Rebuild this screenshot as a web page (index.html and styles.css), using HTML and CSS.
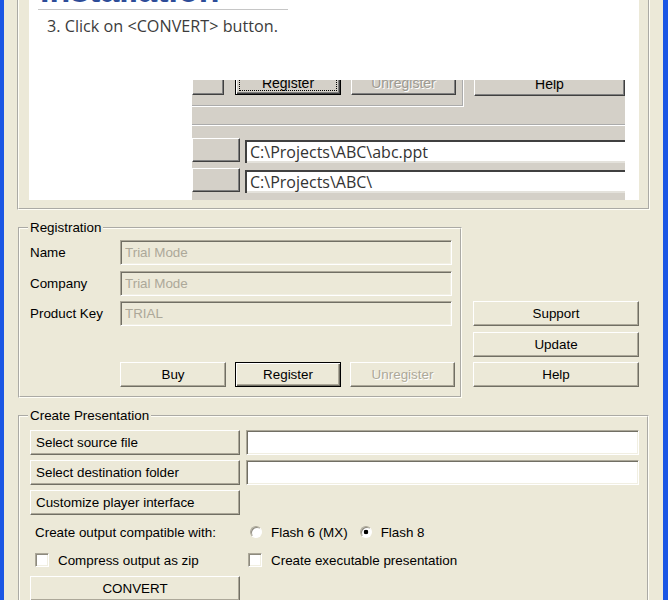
FILE: index.html
```html
<!DOCTYPE html>
<html lang="en">
<head>
    <meta charset="UTF-8">
    <meta name="viewport" content="width=device-width, initial-scale=1.0">
    <title>Converter</title>
    <link rel="stylesheet" href="styles.css">
</head>
<body>
    <div class="window">
        <!-- Tutorial preview -->
        <div class="preview">
            <div class="slide">
                <div class="slide-head">
                    <div class="slide-title"><span>Installation</span></div>
                    <div class="slide-rule"></div>
                    <p class="slide-step">3. Click on &lt;CONVERT&gt; button.</p>
                </div>
                <div class="shot">
                    <div class="shot-top">
                        <div class="shot-group">
                            <span class="cbtn stub"></span>
                            <span class="cbtn focus"><span>Register</span></span>
                            <span class="cbtn off">Unregister</span>
                        </div>
                        <span class="cbtn help">Help</span>
                    </div>
                    <div class="shot-band"></div>
                    <div class="shot-field">
                        <span class="cbtn stub-wide"></span>
                        <span class="cfield">C:\Projects\ABC\abc.ppt</span>
                    </div>
                    <div class="shot-field">
                        <span class="cbtn stub-wide"></span>
                        <span class="cfield">C:\Projects\ABC\</span>
                    </div>
                </div>
            </div>
        </div>

        <!-- Registration -->
        <div class="reg-row">
            <fieldset class="group reg">
                <legend>Registration</legend>
                <div class="reg-grid">
                    <label>Name</label>
                    <input class="field" type="text" value="Trial Mode" disabled>
                    <label>Company</label>
                    <input class="field" type="text" value="Trial Mode" disabled>
                    <label>Product Key</label>
                    <input class="field" type="text" value="TRIAL" disabled>
                </div>
                <div class="reg-buttons">
                    <button class="btn">Buy</button>
                    <button class="btn default">Register</button>
                    <button class="btn" disabled>Unregister</button>
                </div>
            </fieldset>
            <div class="side">
                <button class="btn">Support</button>
                <button class="btn">Update</button>
                <button class="btn">Help</button>
            </div>
        </div>

        <!-- Create Presentation -->
        <fieldset class="group create">
            <legend>Create Presentation</legend>
            <div class="create-grid">
                <button class="btn left">Select source file</button>
                <input class="field white" type="text">
                <button class="btn left">Select destination folder</button>
                <input class="field white" type="text">
                <button class="btn left">Customize player interface</button>
                <span></span>
                <span class="opt-label">Create output compatible with:</span>
                <div class="opts">
                    <span class="opt"><span class="radio"></span>Flash 6 (MX)</span>
                    <span class="opt"><span class="radio on"></span>Flash 8</span>
                </div>
                <span class="opt first"><span class="check"></span>Compress output as zip</span>
                <span class="opt"><span class="check"></span>Create executable presentation</span>
                <button class="btn">CONVERT</button>
            </div>
        </fieldset>
    </div>
</body>
</html>
```

FILE: styles.css
```css
/* Basic Reset */
* {
    box-sizing: border-box;
    margin: 0;
    padding: 0;
}

body {
    font-family: "Liberation Sans", Arial, sans-serif;
    font-size: 13.4px;
    color: #000;
    background: #ece9d8;
}

/* Window frame */
.window {
    width: 668px;
    height: 600px;
    overflow: hidden;
    background: #ece9d8;
    border-left: 4px solid #1a56e4;
    border-right: 5px solid #1a56e4;
}

/* Preview panel */
.preview {
    margin-left: 13px;
    width: 633px;
    height: 210px;
    border: 2px groove #fffef6;
    border-top: none;
    padding: 0 9px 8px 10px;
}

.slide {
    width: 610px;
    height: 200px;
    background: #fff;
    display: flex;
    flex-direction: column;
    overflow: hidden;
}

.slide-head {
    height: 80px;
    padding-left: 9px;
}

.slide-title {
    height: 6px;
    overflow: hidden;
}

.slide-title span {
    display: block;
    margin-top: -26px;
    font: bold 34px/32px "Liberation Sans", Arial, sans-serif;
    color: #2d4c98;
    padding-left: 2px;
}

.slide-rule {
    width: 250px;
    height: 1px;
    margin-top: 3px;
    background: #c6c6c6;
}

.slide-step {
    margin-top: 5px;
    padding-left: 9px;
    font-family: "Open Sans", sans-serif;
    font-size: 16.2px;
    color: #3c3c3c;
}

/* Screenshot crop inside the slide */
.shot {
    flex: 1;
    margin-left: 163px;
    width: 433px;
    background: #d4d0c8;
    overflow: hidden;
}

.shot-top {
    display: flex;
}

.shot-group {
    width: 272px;
    height: 27px;
    border: 2px groove #fff;
    border-top: none;
    border-left: none;
    display: flex;
    align-items: flex-end;
    padding-bottom: 10px;
    overflow: hidden;
}

.cbtn {
    display: flex;
    align-items: center;
    justify-content: center;
    height: 24px;
    background: #d4d0c8;
    border: 1px solid;
    border-color: #fff #404040 #404040 #fff;
    box-shadow: inset -1px -1px #808080;
    font-size: 14px;
    color: #000;
}

.shot-group .cbtn {
    flex-shrink: 0;
}

.stub {
    width: 32px;
}

.focus {
    width: 106px;
    margin-left: 11px;
    border: 1px solid #000;
    box-shadow: inset 1px 1px #fff, inset -1px -1px #404040, inset -2px -2px #808080;
    padding: 3px;
}

.focus span {
    flex: 1;
    height: 100%;
    border: 1px dotted #000;
    text-align: center;
    line-height: 14px;
}

.off {
    width: 105px;
    margin-left: 10px;
    color: #9d9a92;
    text-shadow: 1px 1px #fff;
}

.help {
    flex: 1;
    margin-left: 10px;
    margin-top: -8px;
}

.shot-band {
    height: 19px;
    border-bottom: 2px groove #fff;
    margin-bottom: 12px;
}

.shot-field {
    display: flex;
    height: 25px;
    margin-bottom: 5px;
}

.stub-wide {
    width: 48px;
}

.cfield {
    flex: 1;
    align-self: flex-end;
    height: 23px;
    margin-left: 5px;
    background: #fff;
    border-top: 2px solid #404040;
    border-left: 2px solid #404040;
    box-shadow: inset 0 -2px #e4e2dc;
    padding-left: 3px;
    font-family: "Open Sans", sans-serif;
    font-size: 16px;
    line-height: 20px;
    color: #333;
    white-space: nowrap;
}

/* Group boxes */
.group {
    border: 2px groove #fffef6;
    min-inline-size: 0;
}

.group legend {
    padding: 0 2px;
    margin-left: -2px;
    line-height: 16px;
}

.reg-row {
    display: flex;
    margin-top: 10px;
    margin-left: 14px;
}

.reg {
    width: 444px;
    padding: 4px 5px 9px 10px;
}

.reg-grid {
    display: grid;
    grid-template-columns: 90px 332px;
    grid-auto-rows: 25px;
    row-gap: 5.5px;
    align-items: center;
}

.field {
    height: 25px;
    font: inherit;
    padding: 0 4px;
    background: #ece9d8;
    border: 1px solid;
    border-color: #aca899 #fff #fff #aca899;
    box-shadow: inset 1px 1px #716f64, inset -1px -1px #f1efe2;
    color: #aca899;
    outline: none;
}

.field.white {
    background: #fff;
}

.reg-buttons {
    display: flex;
    gap: 9px;
    margin-top: 36px;
    margin-left: 90px;
}

.btn {
    height: 25px;
    font: inherit;
    color: #000;
    background: #ece9d8;
    border: 1px solid;
    border-color: #fff #716f64 #716f64 #fff;
    box-shadow: inset -1px -1px #aca899;
    text-align: center;
}

.reg-buttons .btn {
    width: 106px;
}

.reg-buttons .btn:last-child {
    width: 105px;
}

.btn.default {
    border: 1px solid #000;
    box-shadow: inset 1px 1px #fff, inset -1px -1px #716f64, inset -2px -2px #aca899;
}

.btn:disabled {
    color: #aca899;
    text-shadow: 1px 1px #fff;
}

.btn.left {
    text-align: left;
    padding-left: 5px;
}

.side {
    align-self: flex-end;
    display: flex;
    flex-direction: column;
    gap: 5.5px;
    width: 166px;
    margin-left: 11px;
    margin-bottom: 11px;
}

/* Create Presentation */
.create {
    margin-top: 10px;
    margin-left: 14px;
    width: 631px;
    height: 220px;
    padding: 6px 8px 0 10px;
}

.create-grid {
    display: grid;
    grid-template-columns: 210px 1fr;
    grid-template-rows: 25px 25px 25px 24px 22px 25px;
    column-gap: 6px;
    row-gap: 5px;
    align-items: center;
}

.opt-label {
    padding-left: 5px;
}

.opts {
    display: flex;
    gap: 10px;
    padding-left: 2px;
}

.opt {
    display: flex;
    align-items: center;
    gap: 9px;
    padding-left: 2px;
}

.opt.first {
    padding-left: 5px;
}

.radio {
    width: 12px;
    height: 12px;
    border-radius: 50%;
    background: #fff;
    border: 1px solid;
    border-color: #aca899 #fff #fff #aca899;
    box-shadow: inset 1px 1px #8d8a7e;
}

.radio.on {
    background: radial-gradient(circle, #000 0 2px, #fff 2.6px);
}

.check {
    width: 14px;
    height: 14px;
    background: #fff;
    border: 1px solid;
    border-color: #aca899 #fff #fff #aca899;
    box-shadow: inset 1px 1px #8d8a7e, inset -1px -1px #f1efe2;
}
```
